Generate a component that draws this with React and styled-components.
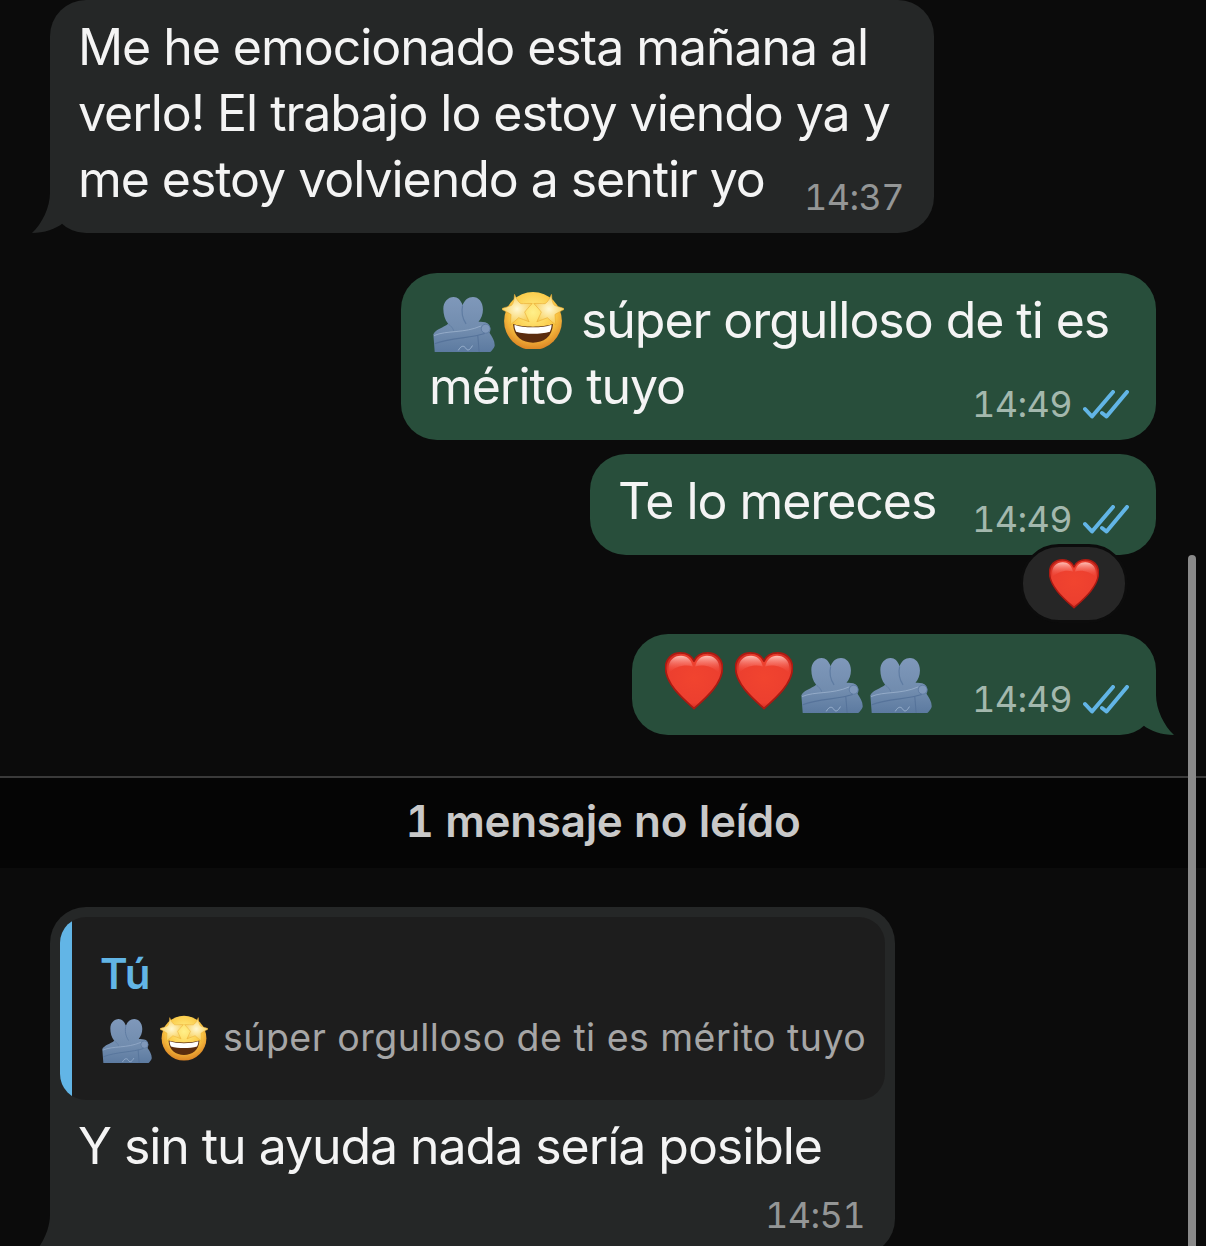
import React from "react";
import styled, { createGlobalStyle } from "styled-components";

const Global = createGlobalStyle`
  html, body { margin: 0; background: #0b0b0b; }
  * { box-sizing: border-box; }
`;

const Screen = styled.div`
  position: relative;
  width: 1206px;
  height: 1246px;
  overflow: hidden;
  background: #0b0b0b;
  font-family: Inter, "Liberation Sans", sans-serif;
  color: #f4f4f4;
`;
const Thread = styled.div`
  display: flex;
  flex-direction: column;
  padding: 0 50px;
`;
const Bubble = styled.div`
  position: relative;
  flex: none;
  width: ${(p) => p.$w}px;
  margin-top: ${(p) => p.$top || 0}px;
  align-self: ${(p) => (p.$out ? "flex-end" : "flex-start")};
  background: ${(p) => (p.$out ? "#284e3b" : "#252727")};
  border-radius: 36px;
  padding: ${(p) => (p.$reply ? "10px 10px 4px 10px" : "14px 27px 21px 28px")};
  padding-right: ${(p) => (p.$reply ? 10 : p.$out ? 27 : 30)}px;
`;
const Line = styled.div`
  display: flex;
  align-items: center;
  height: 66px;
  font-size: 50px;
  letter-spacing: -1.05px;
  white-space: nowrap;
`;
const LastLine = styled(Line)`
  justify-content: space-between;
`;
const Meta = styled.div`
  display: flex;
  align-items: center;
  gap: 11px;
  margin-top: 36px;
  font-size: 36px;
  font-variant-numeric: tabular-nums;
  letter-spacing: -0.6px;
  color: ${(p) => (p.$out ? "#a3b8ad" : "#949696")};
`;
const EmojiRun = styled.span`
  display: inline-flex;
  align-items: center;
  gap: ${(p) => p.$gap || 7}px;
  margin-right: ${(p) => p.$after ?? 18}px;
  margin-left: ${(p) => p.$before || 0}px;
`;
const Tail = styled.svg`
  position: absolute;
  bottom: 0;
  width: 31px;
  height: 40px;
  ${(p) => (p.$out ? "right: -18px; transform: scaleX(-1);" : "left: -18px;")}
`;
const Reaction = styled.div`
  position: absolute;
  right: 28px;
  bottom: -68px;
  width: 108px;
  height: 79px;
  display: flex;
  align-items: center;
  justify-content: center;
  background: #262626;
  border: 3px solid #0c0c0c;
  border-radius: 39px;
`;
const Divider = styled.div`
  margin-top: 41px;
  height: 92px;
  padding-bottom: 4px;
  border-top: 2px solid #3a3a3a;
  background: #050505;
  display: flex;
  align-items: center;
  justify-content: center;
  font-size: 44px;
  font-weight: 600;
  font-variant-numeric: tabular-nums;
  letter-spacing: -0.3px;
  color: #c9c9c9;
`;
const Quote = styled.div`
  height: 183px;
  background: linear-gradient(to right, #62b5e6 12px, #1d1d1d 12px);
  border-radius: 26px;
  padding: 29px 0 0 40px;
`;
const QuoteAuthor = styled.div`
  font-size: 42px;
  font-weight: 600;
  line-height: 56px;
  color: #62b5e6;
`;
const QuoteText = styled.div`
  display: flex;
  align-items: center;
  margin-top: 10px;
  font-size: 37.5px;
  letter-spacing: 0.47px;
  white-space: nowrap;
  color: #a6a6a6;
`;
const ReplyBody = styled.div`
  margin-top: 13px;
  padding: 0 0 0 18px;
`;
const ReplyMeta = styled.div`
  display: flex;
  justify-content: flex-end;
  padding-right: 20px;
  font-size: 36px;
  line-height: 72px;
  font-variant-numeric: tabular-nums;
  letter-spacing: -0.6px;
  color: #949696;
`;
const ScrollBar = styled.div`
  position: absolute;
  left: 1188px;
  top: 555px;
  bottom: 0;
  width: 8px;
  border-radius: 4px 4px 0 0;
  background: #8a8a8a;
`;
const HugSvg = styled.svg`
  flex: none;
  margin-top: ${(p) => p.$w * 0.14}px;
`;
const HeartSvg = styled.svg`
  flex: none;
  margin-right: ${(p) => p.$mr || 0}px;
`;

function Hug({ w = 62 }) {
  return (
    <HugSvg $w={w} width={w} height={(w * 160) / 180} viewBox="0 0 180 160">
      <defs>
        <linearGradient id="hugFill" gradientUnits="userSpaceOnUse" x1="0" y1="0" x2="0" y2="160">
          <stop offset="0" stopColor="#7f98ba" />
          <stop offset="0.6" stopColor="#718cae" />
          <stop offset="1" stopColor="#5c7aa0" />
        </linearGradient>
      </defs>
      <path
        d="M5 160 L1 108 C10 92 30 90 44 78 C34 66 30 50 30 34 C30 14 44 0 60 0 C72 0 80 8 86 24 C92 8 102 0 116 0 C132 0 145 14 145 36 C145 50 140 62 132 72 C140 72 150 72 158 76 C168 84 168 96 164 104 C172 116 180 128 179 142 C176 150 170 156 166 160 Z"
        fill="url(#hugFill)"
      />
      <path d="M86 24 C82 42 84 60 96 78" fill="none" stroke="#5f7ca2" strokeWidth="3.5" />
      <path d="M44 78 C52 84 58 90 60 98" fill="none" stroke="#5f7ca2" strokeWidth="2.5" />
      <path d="M3 112 C40 96 90 106 140 84" fill="none" stroke="#9ab0cc" strokeWidth="2.5" />
      <path d="M5 136 C50 118 110 120 150 106" fill="none" stroke="#56739a" strokeWidth="3" />
      <circle cx="153" cy="92" r="13" fill="#7f98ba" stroke="#56739a" strokeWidth="2" />
      <path d="M130 112 L134 160" fill="none" stroke="#56739a" strokeWidth="3" />
      <path d="M74 154 C82 140 90 140 96 150 C100 156 106 156 114 142" fill="none" stroke="#a5bbd6" strokeWidth="2.4" strokeLinecap="round" />
    </HugSvg>
  );
}

function Star({ w = 62 }) {
  const star = "M0 -44 C4 -28 8 -18 14 -14 C22 -12 34 -12 46 -9 C36 -1 26 6 20 12 C22 22 26 32 28 42 C18 36 8 30 0 25 C-8 30 -18 36 -28 42 C-26 32 -22 22 -20 12 C-26 6 -36 -1 -46 -9 C-34 -12 -22 -12 -14 -14 C-8 -18 -4 -28 0 -44 Z";
  return (
    <svg width={w} height={w * 0.95} viewBox="0 0 180 171" style={{ flex: "none" }}>
      <defs>
        <radialGradient id="starFace" cx="0.5" cy="0.35" r="0.72">
          <stop offset="0" stopColor="#fff08a" />
          <stop offset="0.55" stopColor="#fbc945" />
          <stop offset="1" stopColor="#d3701a" />
        </radialGradient>
        <radialGradient id="starGold" cx="0.5" cy="0.5" r="0.6">
          <stop offset="0" stopColor="#fff8d2" />
          <stop offset="1" stopColor="#f6c63e" />
        </radialGradient>
      </defs>
      <circle cx="90" cy="87" r="84" fill="url(#starFace)" />
      <path d="M32 96 C60 106 120 106 148 96 C146 134 120 150 90 150 C60 150 34 134 32 96 Z" fill="#5a2c0e" />
      <path d="M36 98 C62 108 118 108 144 98 C144 106 142 112 139 118 C110 126 70 126 41 118 C38 112 36 106 36 98 Z" fill="#fff" />
      <g fill="url(#starGold)" stroke="#e8a52c" strokeWidth="1.5" strokeLinejoin="round">
        <path transform="translate(44 53) rotate(-10)" d={star} />
        <path transform="translate(136 53) rotate(10)" d={star} />
      </g>
    </svg>
  );
}

function Heart({ w = 58, mr }) {
  return (
    <HeartSvg $mr={mr} width={w} height={w} viewBox="1 2 98 97">
      <defs>
        <radialGradient id="heartFill" cx="0.5" cy="0.45" r="0.6">
          <stop offset="0" stopColor="#f1442f" />
          <stop offset="0.75" stopColor="#ec3f2f" />
          <stop offset="1" stopColor="#c3221a" />
        </radialGradient>
        <linearGradient id="heartShine" x1="0" y1="0" x2="0" y2="1">
          <stop offset="0" stopColor="#ffc4bb" stopOpacity="0.95" />
          <stop offset="1" stopColor="#f4473a" stopOpacity="0" />
        </linearGradient>
      </defs>
      <path d="M50 97 C36 84 3 58 2 30 C1 13 13 3 27 3 C38 3 46 8 50 17 C54 8 62 3 73 3 C87 3 99 13 98 30 C97 58 64 84 50 97 Z" fill="url(#heartFill)" stroke="#ab1a12" strokeWidth="3" strokeLinejoin="round" />
      <path d="M7 30 C7 16 16 8 28 8 C38 8 45 14 48 26 C34 22 18 26 7 38 Z" fill="url(#heartShine)" />
      <path d="M93 30 C93 16 84 8 72 8 C62 8 55 14 52 26 C66 22 82 26 93 38 Z" fill="url(#heartShine)" />
    </HeartSvg>
  );
}

function Checks() {
  return (
    <svg width="46" height="29" viewBox="0 0 46 29" fill="none" stroke="#62b5e6" strokeWidth="4" strokeLinecap="round" strokeLinejoin="round" style={{ flex: "none" }}>
      <path d="M2 19 L9 26.5 L30 2" />
      <path d="M19 23 L23.5 26.5 L44 2" />
    </svg>
  );
}

function TailShape({ out }) {
  return (
    <Tail $out={out} viewBox="0 0 31 40">
      <path d="M18 0 C18 14 10 31 0 40 C12 40 24 36 31 30 L31 0 Z" fill={out ? "#284e3b" : "#252727"} />
    </Tail>
  );
}

function Time({ out, checks, children }) {
  return (
    <Meta $out={out}>
      {children}
      {checks && <Checks />}
    </Meta>
  );
}

export default function App() {
  return (
    <Screen>
      <Global />
      <Thread>
        <Bubble $w={884}>
          <Line>Me he emocionado esta mañana al</Line>
          <Line>verlo! El trabajo lo estoy viendo ya y</Line>
          <LastLine>
            me estoy volviendo a sentir yo
            <Time>14:37</Time>
          </LastLine>
          <TailShape />
        </Bubble>

        <Bubble $out $w={755} $top={40}>
          <Line>
            <EmojiRun $before={4} $after={17}>
              <Hug />
              <Star />
            </EmojiRun>
            súper orgulloso de ti es
          </Line>
          <LastLine>
            mérito tuyo
            <Time out checks>14:49</Time>
          </LastLine>
        </Bubble>

        <Bubble $out $w={566} $top={14}>
          <LastLine>
            Te lo mereces
            <Time out checks>14:49</Time>
          </LastLine>
          <Reaction>
            <Heart w={50} />
          </Reaction>
        </Bubble>

        <Bubble $out $w={524} $top={79}>
          <LastLine>
            <EmojiRun $before={5} $gap={7} $after={0}>
              <Heart mr={5} />
              <Heart mr={1} />
              <Hug />
              <Hug />
            </EmojiRun>
            <Time out checks>14:49</Time>
          </LastLine>
          <TailShape out />
        </Bubble>
      </Thread>

      <Divider>1 mensaje no leído</Divider>

      <Thread>
        <Bubble $reply $w={845} $top={39}>
          <Quote>
            <QuoteAuthor>Tú</QuoteAuthor>
            <QuoteText>
              <EmojiRun $before={2} $gap={8} $after={15}>
                <Hug w={50} />
                <Star w={48} />
              </EmojiRun>
              súper orgulloso de ti es mérito tuyo
            </QuoteText>
          </Quote>
          <ReplyBody>
            <Line>Y sin tu ayuda nada sería posible</Line>
          </ReplyBody>
          <ReplyMeta>14:51</ReplyMeta>
          <TailShape />
        </Bubble>
      </Thread>

      <ScrollBar />
    </Screen>
  );
}
